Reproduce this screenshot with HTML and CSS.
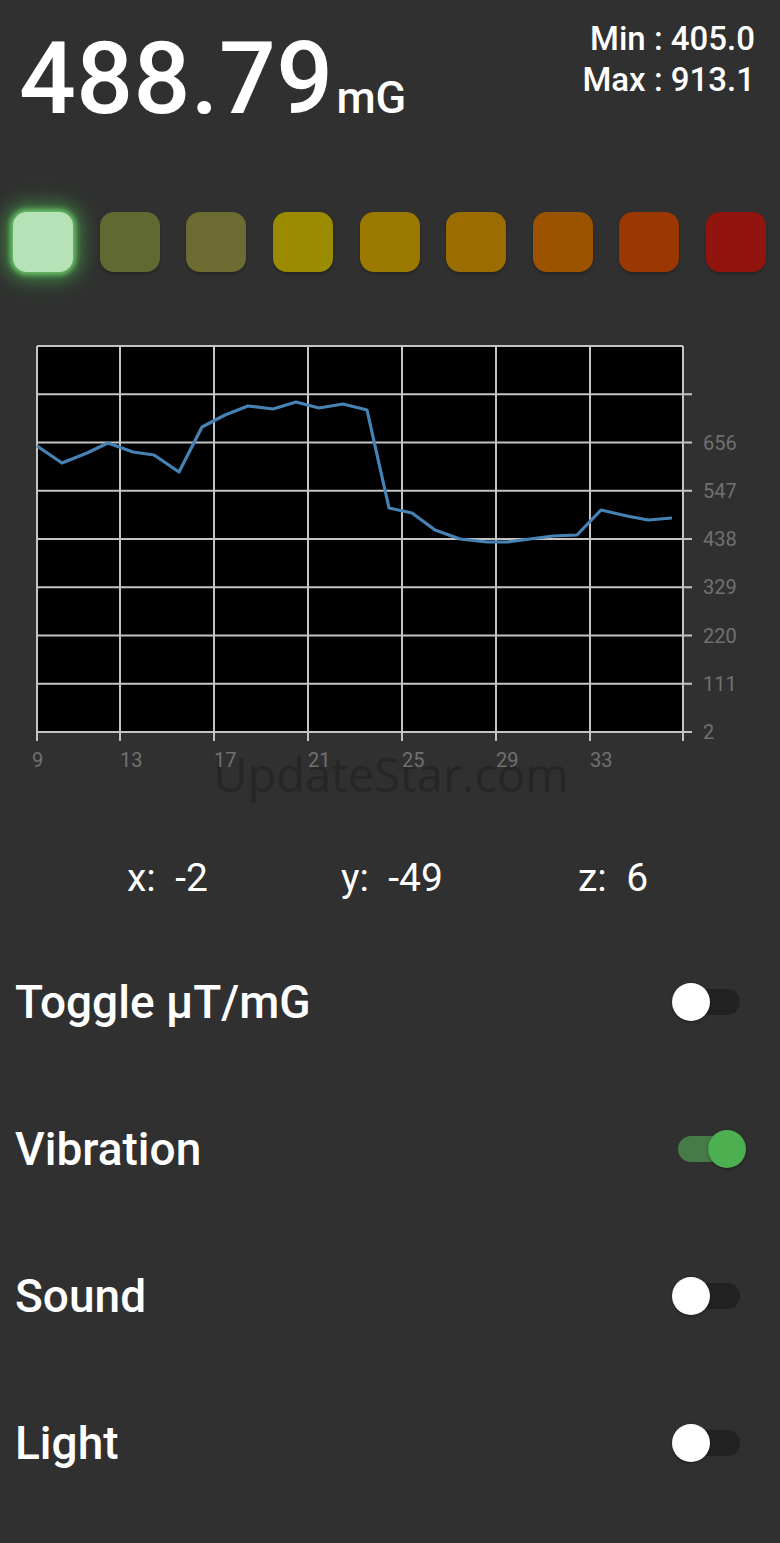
FILE: index.html
```html
<!DOCTYPE html>
<html lang="en">
<head>
<meta charset="utf-8">
<title>Magnetometer</title>
<link rel="stylesheet" href="styles.css">
</head>
<body>
<div class="app">
  <header class="header">
    <div class="reading"><span class="value">488.79</span><span class="unit">mG</span></div>
    <div class="minmax">
      <div>Min : 405.0</div>
      <div>Max : 913.1</div>
    </div>
  </header>

  <div class="leds">
    <div class="led led-on"></div>
    <div class="led l2"></div>
    <div class="led l3"></div>
    <div class="led l4"></div>
    <div class="led l5"></div>
    <div class="led l6"></div>
    <div class="led l7"></div>
    <div class="led l8"></div>
    <div class="led l9"></div>
  </div>

  <svg class="chart" viewBox="0 0 780 480" width="780" height="480">
    <rect x="37" y="16" width="646" height="386" fill="#000"/>
    <g class="grid">
      <line x1="37" y1="16" x2="683" y2="16"/>
      <line x1="37" y1="64.25" x2="692" y2="64.25"/>
      <line x1="37" y1="112.5" x2="692" y2="112.5"/>
      <line x1="37" y1="160.75" x2="692" y2="160.75"/>
      <line x1="37" y1="209" x2="692" y2="209"/>
      <line x1="37" y1="257.25" x2="692" y2="257.25"/>
      <line x1="37" y1="305.5" x2="692" y2="305.5"/>
      <line x1="37" y1="353.75" x2="692" y2="353.75"/>
      <line x1="37" y1="402" x2="692" y2="402"/>
      <line x1="37" y1="16" x2="37" y2="411"/>
      <line x1="120" y1="16" x2="120" y2="411"/>
      <line x1="214" y1="16" x2="214" y2="411"/>
      <line x1="308" y1="16" x2="308" y2="411"/>
      <line x1="402" y1="16" x2="402" y2="411"/>
      <line x1="496" y1="16" x2="496" y2="411"/>
      <line x1="590" y1="16" x2="590" y2="411"/>
      <line x1="683" y1="16" x2="683" y2="411"/>
    </g>
    <polyline class="series" points="37,116 62,133 87,123 108,113 133,122 154,125 179,142 202,97 225,85 248,76 273,79 296,72 319,78 343,74 367,80 389,178 412,183 435,200 460,209 487,212 507,212 530,209 553,206 577,205 601,180 627,186 648,190 672,188"/>
    <text class="watermark" x="391" y="462">UpdateStar.com</text>
    <g class="ylabels">
      <text x="703" y="120">656</text>
      <text x="703" y="168">547</text>
      <text x="703" y="216">438</text>
      <text x="703" y="264">329</text>
      <text x="703" y="313">220</text>
      <text x="703" y="361">111</text>
      <text x="703" y="409">2</text>
    </g>
    <g class="xlabels">
      <text x="32" y="437">9</text>
      <text x="120" y="437">13</text>
      <text x="214" y="437">17</text>
      <text x="308" y="437">21</text>
      <text x="402" y="437">25</text>
      <text x="496" y="437">29</text>
      <text x="590" y="437">33</text>
    </g>
  </svg>

  <div class="axes">
    <span class="axis ax-x">x:  -2</span>
    <span class="axis ax-y">y:  -49</span>
    <span class="axis ax-z">z:  6</span>
  </div>

  <div class="settings">
    <div class="row">
      <span class="label">Toggle µT/mG</span>
      <span class="switch"><span class="track"></span><span class="thumb"></span></span>
    </div>
    <div class="row">
      <span class="label">Vibration</span>
      <span class="switch on"><span class="track"></span><span class="thumb"></span></span>
    </div>
    <div class="row">
      <span class="label">Sound</span>
      <span class="switch"><span class="track"></span><span class="thumb"></span></span>
    </div>
    <div class="row">
      <span class="label">Light</span>
      <span class="switch"><span class="track"></span><span class="thumb"></span></span>
    </div>
  </div>
</div>
</body>
</html>
```
FILE: styles.css
```css
* { box-sizing: border-box; }
html, body {
  margin: 0;
  padding: 0;
  background: #303030;
}
body {
  font-family: Roboto, "Liberation Sans", sans-serif;
  color: #fff;
  width: 780px;
  min-height: 1543px;
}
.app {
  display: flex;
  flex-direction: column;
}

/* header */
.header {
  height: 128px;
  padding: 18px 25px 0 19px;
  display: flex;
  justify-content: space-between;
  align-items: flex-start;
}
.reading {
  margin-top: 12px;
  display: flex;
  align-items: baseline;
  line-height: 98px;
}
.value {
  font-size: 100px;
  font-weight: 500;
  letter-spacing: 0.4px;
}
.unit {
  font-size: 45px;
  font-weight: 500;
  margin-left: 3px;
}
.minmax {
  text-align: right;
  font-size: 33px;
  font-weight: 500;
  line-height: 41px;
}

/* leds */
.leds {
  margin-top: 84px;
  height: 60px;
  padding: 0 14px 0 13px;
  display: flex;
  justify-content: space-between;
}
.led {
  width: 60px;
  height: 60px;
  border-radius: 14px;
  box-shadow: 0 2px 3px rgba(0, 0, 0, 0.25);
}
.led-on {
  background: #b7e2b8;
  box-shadow: 0 0 5px 3px rgba(110, 200, 110, 0.9), 0 0 16px 8px rgba(76, 175, 80, 0.5), 0 0 30px 12px rgba(76, 175, 80, 0.18);
}
.l2 { background: #606930; }
.l3 { background: #6c6b31; }
.l4 { background: #9b8b00; }
.l5 { background: #9b7800; }
.l6 { background: #9b6c00; }
.l7 { background: #9b5300; }
.l8 { background: #9b3700; }
.l9 { background: #91150e; }

/* chart */
.chart {
  display: block;
  margin-top: 58px;
}
.grid line {
  stroke: #c4c4c4;
  stroke-width: 2;
}
.series {
  fill: none;
  stroke: #4682b4;
  stroke-width: 3.2;
  stroke-linejoin: round;
}
.ylabels text, .xlabels text {
  font-family: Roboto, "Liberation Sans", sans-serif;
  font-size: 20px;
  fill: #707070;
}
.watermark {
  font-family: "Open Sans", "DejaVu Sans", sans-serif;
  font-size: 47px;
  fill: #262626;
  text-anchor: middle;
}

/* axes */
.axes {
  margin-top: 50px;
  height: 36px;
  padding-left: 127px;
  display: flex;
  font-size: 39px;
  line-height: 36px;
  white-space: pre;
}
.ax-x { width: 214px; }
.ax-y { width: 237px; }

/* settings */
.settings {
  margin-top: 32px;
  display: flex;
  flex-direction: column;
}
.row {
  height: 147px;
  padding: 0 40px 0 15px;
  display: flex;
  align-items: center;
  justify-content: space-between;
}
.label {
  font-size: 46px;
  font-weight: 500;
  line-height: 44px;
}
.switch {
  position: relative;
  width: 62px;
  height: 38px;
  display: flex;
  align-items: center;
}
.track {
  width: 62px;
  height: 26px;
  border-radius: 13px;
  background: #222222;
}
.thumb {
  position: absolute;
  top: 0;
  left: -6px;
  width: 38px;
  height: 38px;
  border-radius: 50%;
  background: #ffffff;
  box-shadow: 0 1px 3px rgba(0, 0, 0, 0.4);
}
.switch.on .track { background: #467a48; }
.switch.on .thumb {
  left: 30px;
  background: #4caf50;
}
```
